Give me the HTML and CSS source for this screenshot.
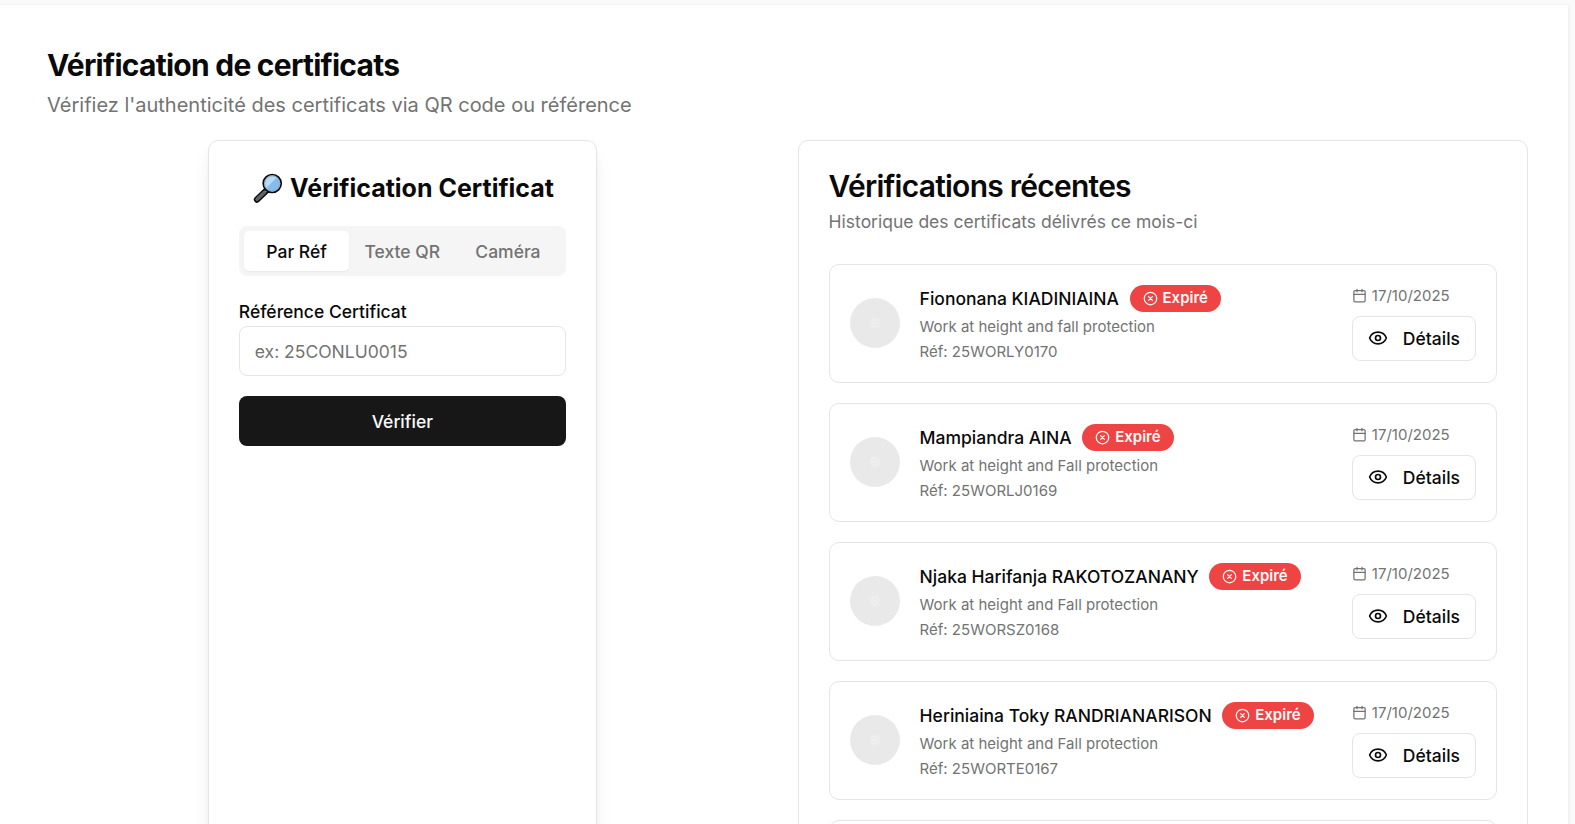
FILE: index.html
```html
<!DOCTYPE html>
<html lang="fr">
<head>
    <meta charset="UTF-8">
    <meta name="viewport" content="width=device-width, initial-scale=1.0">
    <title>Vérification de certificats</title>
    <link rel="stylesheet" href="styles.css">
</head>
<body>
    <!-- Icônes partagées -->
    <svg class="sprite" aria-hidden="true">
        <symbol id="icon-calendar" viewBox="0 0 24 24">
            <path d="M8 2v4M16 2v4M3 10h18"/>
            <rect width="18" height="18" x="3" y="4" rx="2"/>
        </symbol>
        <symbol id="icon-eye" viewBox="0 0 24 24">
            <path d="M2.062 12.348a1 1 0 0 1 0-.696 10.75 10.75 0 0 1 19.876 0 1 1 0 0 1 0 .696 10.75 10.75 0 0 1-19.876 0"/>
            <circle cx="12" cy="12" r="3"/>
        </symbol>
        <symbol id="icon-x" viewBox="0 0 24 24">
            <circle cx="12" cy="12" r="10"/>
            <path d="m15 9-6 6M9 9l6 6"/>
        </symbol>
    </svg>

    <main class="page">
        <header class="page-header">
            <h1>Vérification de certificats</h1>
            <p>Vérifiez l'authenticité des certificats via QR code ou référence</p>
        </header>

        <div class="columns">
            <section class="card verify-card">
                <h2 class="verify-title">
                    <svg class="magnifier" viewBox="0 0 30 30">
                        <path d="M14.5 16.5 4 26.5" stroke="#0b0b0b" stroke-width="6.4" stroke-linecap="round"/>
                        <path d="M11.5 19.3 4.1 26.3" stroke="#5b6468" stroke-width="3.6" stroke-linecap="round"/>
                        <path d="M14 16.9l-1.6 1.5" stroke="#9aa3a8" stroke-width="2.4"/>
                        <circle cx="19.2" cy="10.5" r="9" fill="#83bdf0" stroke="#0b0b0b" stroke-width="1.7"/>
                        <path d="M13.2 15a7.5 7.5 0 0 1 10.6-10.4z" fill="#b5dbf7"/>
                        <circle cx="19.2" cy="10.5" r="7.6" fill="none" stroke="#9aa9b5" stroke-width="1"/>
                    </svg>
                    <span>Vérification Certificat</span>
                </h2>
                <div class="tabs">
                    <button type="button" class="tab active">Par Réf</button>
                    <button type="button" class="tab">Texte QR</button>
                    <button type="button" class="tab">Caméra</button>
                </div>
                <form class="verify-form">
                    <label for="reference">Référence Certificat</label>
                    <input type="text" id="reference" name="reference" placeholder="ex: 25CONLU0015">
                    <button type="submit" class="submit">Vérifier</button>
                </form>
            </section>

            <section class="card recent-card">
                <h2>Vérifications récentes</h2>
                <p class="subtitle">Historique des certificats délivrés ce mois-ci</p>
                <div class="list" id="list"></div>
            </section>
        </div>
    </main>

    <script>
        const certificates = [
            { name: 'Fiononana KIADINIAINA', course: 'Work at height and fall protection', ref: '25WORLY0170', date: '17/10/2025' },
            { name: 'Mampiandra AINA', course: 'Work at height and Fall protection', ref: '25WORLJ0169', date: '17/10/2025' },
            { name: 'Njaka Harifanja RAKOTOZANANY', course: 'Work at height and Fall protection', ref: '25WORSZ0168', date: '17/10/2025' },
            { name: 'Heriniaina Toky RANDRIANARISON', course: 'Work at height and Fall protection', ref: '25WORTE0167', date: '17/10/2025' }
        ];

        const rows = certificates.map((c) => `
            <article class="item">
                <div class="avatar"></div>
                <div class="info">
                    <div class="name-row">
                        <span class="name">${c.name}</span>
                        <span class="badge"><svg class="icon"><use href="#icon-x"/></svg><span>Expiré</span></span>
                    </div>
                    <p>${c.course}</p>
                    <p>Réf: ${c.ref}</p>
                </div>
                <div class="actions">
                    <div class="date"><svg class="icon"><use href="#icon-calendar"/></svg>${c.date}</div>
                    <button type="button" class="details"><svg class="icon"><use href="#icon-eye"/></svg>Détails</button>
                </div>
            </article>`);

        rows.push('<article class="item"></article>');
        document.getElementById('list').innerHTML = rows.join('');
    </script>
</body>
</html>
```
FILE: styles.css
```css
* {
    box-sizing: border-box;
    margin: 0;
}
body {
    height: 100vh;
    overflow: hidden;
    padding: 5px 7px 0 0;
    background-color: #fafafa;
    color: #0a0a0a;
    font-family: Inter, "Liberation Sans", sans-serif;
    font-size: 17.5px;
    line-height: 25px;
}
button, input {
    font: inherit;
}
.sprite {
    display: none;
}
.icon {
    flex: none;
    width: 15px;
    height: 15px;
    fill: none;
    stroke: currentColor;
    stroke-width: 2;
    stroke-linecap: round;
    stroke-linejoin: round;
}
.page {
    height: 100%;
    overflow: hidden;
    padding: 40px 40px 0 47px;
    background-color: #fff;
    box-shadow: 0 1px 4px rgba(0, 0, 0, 0.1);
}
.page-header h1 {
    font-size: 30px;
    font-weight: 700;
    line-height: 40px;
    letter-spacing: -0.75px;
}
.page-header p {
    margin-top: 5px;
    color: #737373;
    font-size: 20px;
    line-height: 30px;
}
.columns {
    display: grid;
    grid-template-columns: 710.6px 1fr;
    gap: 40px;
    height: 900px;
    margin-top: 20px;
}
.card {
    padding: 30px;
    border: 1px solid #e5e5e5;
    border-radius: 10px;
    background-color: #fff;
}
.verify-card {
    justify-self: center;
    width: 389px;
    box-shadow: 0 12px 19px -4px rgba(0, 0, 0, 0.1), 0 5px 8px -5px rgba(0, 0, 0, 0.1);
}
.verify-title {
    display: flex;
    align-items: center;
    justify-content: center;
    gap: 7.5px;
    padding-left: 2px;
    font-size: 25px;
    font-weight: 700;
    line-height: 35px;
}
.magnifier {
    width: 30px;
    height: 30px;
    margin-bottom: 2px;
    fill: none;
}
.tabs {
    display: grid;
    grid-template-columns: repeat(3, 1fr);
    height: 50px;
    margin-top: 20px;
    padding: 5px;
    border-radius: 8px;
    background-color: #f5f5f5;
}
.tab {
    padding: 0;
    border: none;
    border-radius: 5px;
    background: none;
    color: #737373;
    font-weight: 500;
}
.tab.active {
    background-color: #fff;
    color: #0a0a0a;
    box-shadow: 0 1px 2px rgba(0, 0, 0, 0.06);
}
.verify-form {
    display: flex;
    flex-direction: column;
    margin-top: 23px;
}
.verify-form label {
    margin-bottom: 2px;
    font-weight: 500;
}
.verify-form input {
    height: 50px;
    padding: 0 15px;
    border: 1px solid #e5e5e5;
    border-radius: 8px;
}
.verify-form input::placeholder {
    color: #737373;
}
.submit {
    height: 50px;
    margin-top: 20px;
    border: none;
    border-radius: 8px;
    background-color: #171717;
    color: #fafafa;
    font-weight: 500;
}
.recent-card h2 {
    font-size: 30px;
    font-weight: 600;
    line-height: 30px;
    letter-spacing: -0.75px;
}
.subtitle {
    margin-top: 8px;
    color: #737373;
}
.list {
    display: grid;
    gap: 20px;
    margin-top: 30px;
}
.item {
    display: flex;
    align-items: center;
    gap: 20px;
    height: 119px;
    padding: 20px;
    border: 1px solid #e5e5e5;
    border-radius: 10px;
}
.avatar {
    width: 50px;
    height: 50px;
    margin-bottom: 2px;
    border-radius: 50%;
    background: radial-gradient(circle, #f5f5f5 1px, #e6e6e6 1.5px, #efefef 2.5px, #ececec 5px, #e9e9e9 6px);
}
.info {
    flex: 1;
}
.info p {
    margin-top: 5px;
    color: #737373;
    font-size: 15px;
    line-height: 20px;
}
.name-row {
    display: flex;
    align-items: center;
    gap: 10.5px;
    height: 27px;
}
.name {
    font-weight: 500;
}
.badge {
    display: flex;
    align-items: center;
    gap: 5px;
    height: 27px;
    padding: 0 13.3px 0 13px;
    border-radius: 14px;
    background-color: #ef4444;
    color: #fafafa;
    font-size: 15px;
    font-weight: 600;
    line-height: 20px;
}
.badge span {
    margin-bottom: 2px;
}
.date {
    display: flex;
    align-items: center;
    gap: 5px;
    margin-bottom: 10px;
    color: #737373;
    font-size: 15px;
    line-height: 20px;
}
.date .icon {
    margin-bottom: 1px;
}
.details {
    display: flex;
    align-items: center;
    gap: 15px;
    height: 45px;
    padding: 0 15px;
    border: 1px solid #e5e5e5;
    border-radius: 8px;
    background-color: #fff;
    color: #0a0a0a;
    font-weight: 500;
}
.details .icon {
    width: 20px;
    height: 20px;
    margin-bottom: 2px;
}
```
